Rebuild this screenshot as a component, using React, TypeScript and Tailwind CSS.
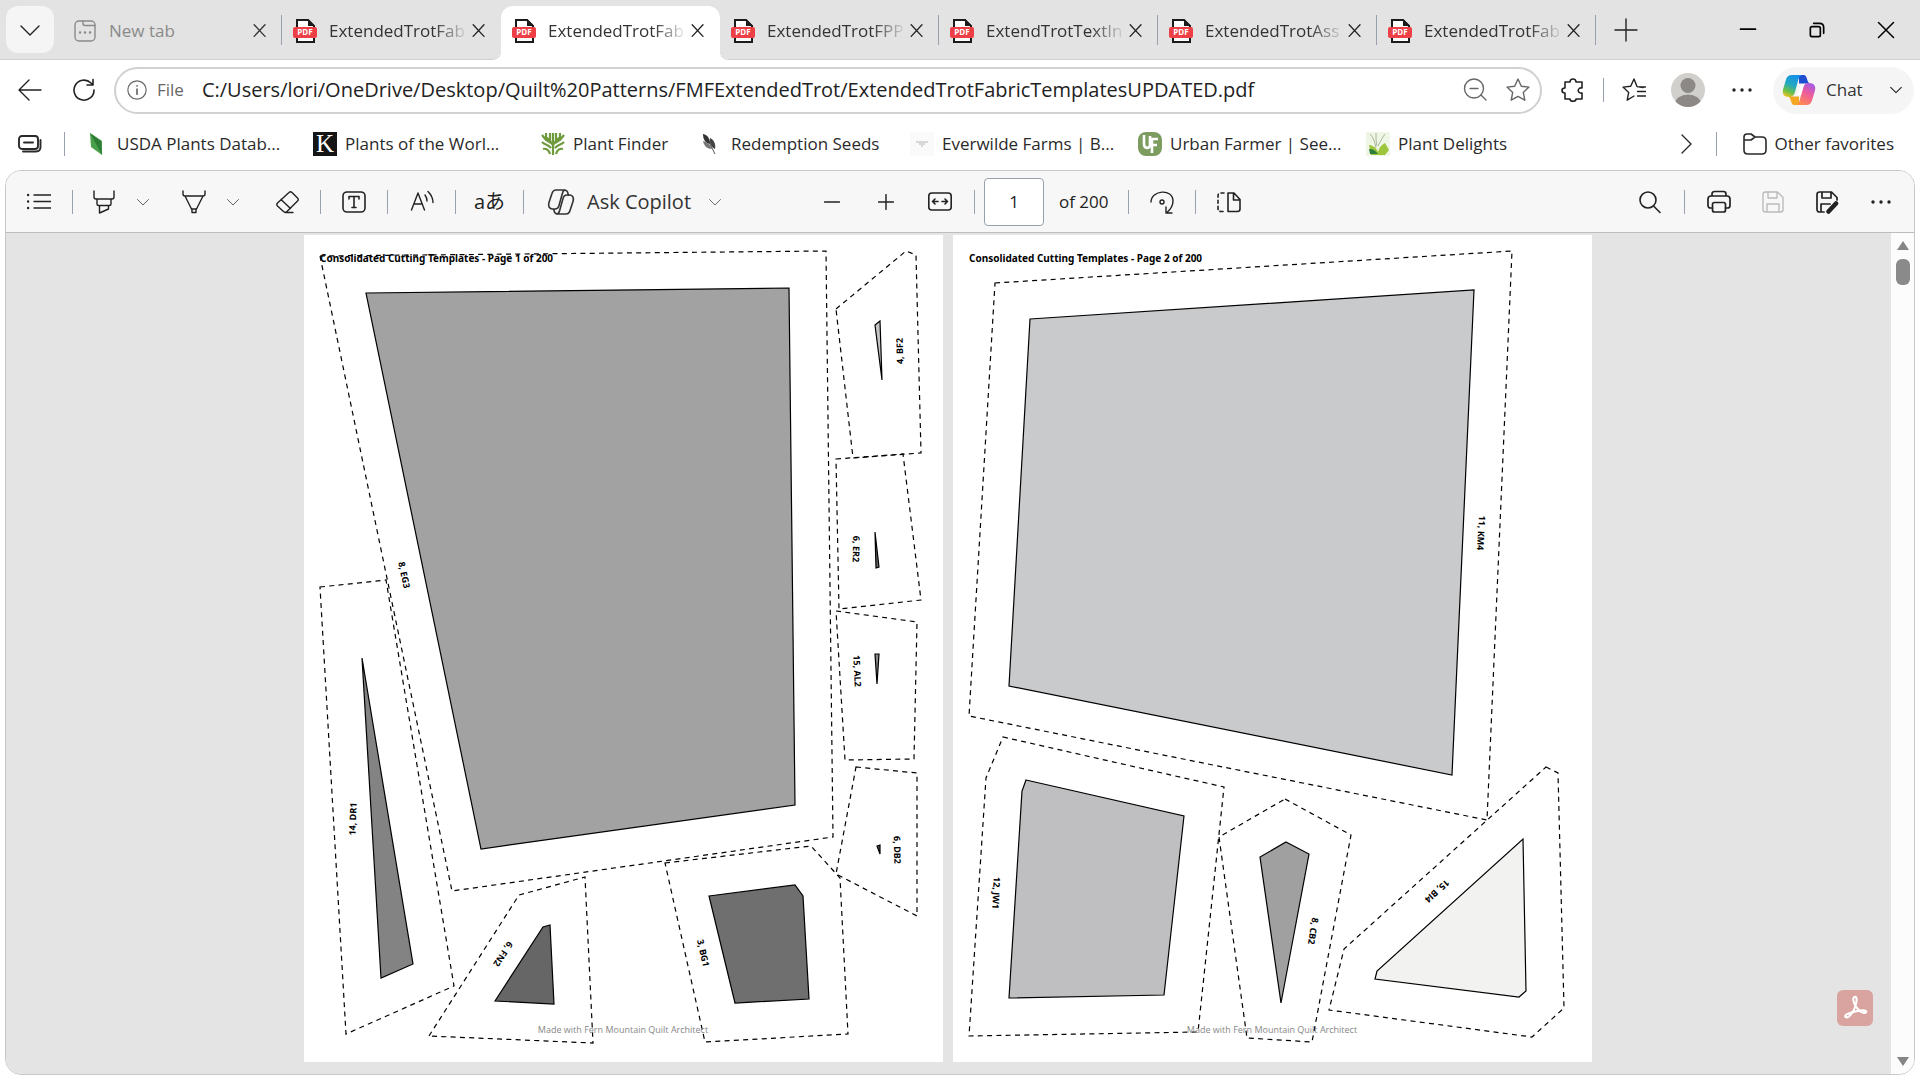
import React from 'react';

type Piece = {
  label: string;
  at: [number, number, number]; // x, y, angle
  seam: string;
  cut: string;
  fill: string;
};

// PDF coordinates share one canvas, each sheet shows its own window of it
const sheetOne: Piece[] = [
  {
    label: '8, EG3',
    at: [404, 575, 78],
    seam: '320,256 826,251 833,837 452,891',
    cut: '366,293 789,288 795,805 481,849',
    fill: '#a2a2a2',
  },
  {
    label: '14, DR1',
    at: [353, 819, -88],
    seam: '320,587 386,580 454,986 346,1034',
    cut: '362,658 413,964 381,978',
    fill: '#838383',
  },
  {
    label: '6, FN2',
    at: [503, 954, 123],
    seam: '429,1036 519,895 585,877 593,1043',
    cut: '495,1001 543,927 550,925 554,1004',
    fill: '#666666',
  },
  {
    label: '3, BG1',
    at: [703, 953, 77],
    seam: '665,863 811,846 840,878 848,1034 705,1042',
    cut: '709,896 795,885 803,896 809,999 735,1003',
    fill: '#6f6f6f',
  },
  {
    label: '4, BF2',
    at: [900, 351, -91],
    seam: '836,309 906,251 916,255 921,453 853,458',
    cut: '875,325 880,321 882,380',
    fill: '#c5c5c5',
  },
  {
    label: '6, ER2',
    at: [856, 549, 91],
    seam: '836,459 903,454 921,600 839,609',
    cut: '875,532 879,567 876,568',
    fill: '#666666',
  },
  {
    label: '15, AL2',
    at: [857, 671, 87],
    seam: '836,611 917,622 914,759 845,760',
    cut: '875,654 879,654 877,684',
    fill: '#888888',
  },
  {
    label: '6, DB2',
    at: [897, 850, 89],
    seam: '856,767 917,773 917,916 836,874',
    cut: '877,846 880,845 880,854',
    fill: '#555555',
  },
];

const sheetTwo: Piece[] = [
  {
    label: '11, KM4',
    at: [1481, 533, 93],
    seam: '995,283 1512,251 1487,820 969,716',
    cut: '1030,319 1474,290 1452,775 1009,686',
    fill: '#c9cacc',
  },
  {
    label: '12, JW1',
    at: [996, 893, 93],
    seam: '1003,737 1224,787 1198,1032 969,1036 986,778',
    cut: '1026,780 1184,816 1164,995 1009,998 1022,791',
    fill: '#bfbfc1',
  },
  {
    label: '8, CB2',
    at: [1313, 931, 99],
    seam: '1285,799 1351,835 1312,1042 1247,1038 1219,837',
    cut: '1286,842 1309,854 1281,1003 1260,857',
    fill: '#a0a0a0',
  },
  {
    label: '15, BI4',
    at: [1437, 891, 138],
    seam: '1546,767 1558,773 1564,1008 1532,1037 1329,1010 1344,949',
    cut: '1523,839 1526,991 1519,997 1375,979 1377,971',
    fill: '#f2f2f1',
  },
];

const tabs = [
  { title: 'ExtendedTrotFab', active: false },
  { title: 'ExtendedTrotFab', active: true },
  { title: 'ExtendedTrotFPP', active: false },
  { title: 'ExtendTrotTextIn', active: false },
  { title: 'ExtendedTrotAss', active: false },
  { title: 'ExtendedTrotFab', active: false },
];

const Icon: React.FC<{ children: React.ReactNode; size?: string; weight?: number }> = ({
  children,
  size = 'size-6',
  weight = 1.4,
}) => (
  <svg
    viewBox="0 0 24 24"
    className={`${size} shrink-0`}
    fill="none"
    stroke="currentColor"
    strokeWidth={weight}
    strokeLinecap="round"
    strokeLinejoin="round"
    aria-hidden="true"
  >
    {children}
  </svg>
);

const Cross = () => (
  <Icon size="size-5" weight={1.6}>
    <path d="M5 4.500l13 14M18 4.500l-13 14" />
  </Icon>
);

const Chevron = () => (
  <Icon size="size-4" weight={1.6}>
    <path d="M4 8l8 8 8-8" />
  </Icon>
);

const Dots = () => (
  <Icon>
    <g fill="currentColor" stroke="none">
      <circle cx="4" cy="12" r="1.700" />
      <circle cx="12" cy="12" r="1.700" />
      <circle cx="20" cy="12" r="1.700" />
    </g>
  </Icon>
);

const PdfIcon = () => (
  <svg viewBox="0 0 24 26" className="h-[26px] w-6 shrink-0" aria-hidden="true">
    <path d="M4 2h11l6 6v16H4z" fill="#fff" stroke="#1b1b1b" strokeWidth="2" />
    <path d="M15 1v7h7z" fill="#1b1b1b" />
    <rect x="0" y="9" width="24" height="11" rx="2" fill="#ee3e46" />
    <text x="12" y="17" textAnchor="middle" fill="#fff" fontSize="8" fontWeight="700" fontFamily="Open Sans, sans-serif">
      PDF
    </text>
  </svg>
);

const CopilotLogo = () => (
  <svg viewBox="0 0 34 32" className="h-8 w-[34px] shrink-0" aria-hidden="true">
    <defs>
      <linearGradient id="cpA" x1="0.6" y1="0" x2="0.2" y2="1">
        <stop offset="0" stopColor="#1590e8" />
        <stop offset="0.45" stopColor="#22a9c0" />
        <stop offset="0.75" stopColor="#6cc04a" />
        <stop offset="1" stopColor="#f2c21b" />
      </linearGradient>
      <linearGradient id="cpB" x1="0.8" y1="0" x2="0.3" y2="1">
        <stop offset="0" stopColor="#a25be8" />
        <stop offset="0.45" stopColor="#ee5c9c" />
        <stop offset="1" stopColor="#ff8a4c" />
      </linearGradient>
    </defs>
    <path d="M17 1h4c3 0 3.500 2 4.500 5.500.600 2 1.500 3 3.500 3H17z" fill="#1f4fd0" />
    <path d="M17 31h-4c-3 0-3.500-2-4.500-5.500-.600-2-1.500-3-3.500-3h12z" fill="#f5a623" />
    <path d="M10 1h11c-3 0-4 2-5 6l-3 11c-1 3.500-2.500 5-6 5-5 0-7-3-6-7.500L4 5.500C5 2.500 6.500 1 10 1z" fill="url(#cpA)" />
    <path d="M24 31H13c3 0 4-2 5-6l3-11c1-3.500 2.500-5 6-5 5 0 7 3 6 7.500l-3 10c-1 3-2.500 4.500-6 4.500z" fill="url(#cpB)" />
    <path d="M19 11h3l-3 10h-4z" fill="#fff" />
  </svg>
);

const Sep = () => <span className="h-6 w-px shrink-0 bg-gray-400" />;

const Tool: React.FC<{ label: string; className?: string; children: React.ReactNode }> = ({
  label,
  className = 'w-10',
  children,
}) => (
  <button aria-label={label} className={`flex h-10 shrink-0 items-center justify-center ${className}`}>
    {children}
  </button>
);

const Tab: React.FC<{ title: string; active: boolean; separator: boolean }> = ({ title, active, separator }) => (
  <div
    className={`relative flex w-[219px] shrink-0 items-center pl-[11px] pr-3 ${
      active ? 'z-10 mt-1.5 h-[54px] rounded-t-xl bg-white pb-1' : 'h-[60px] pt-0.5'
    }`}
  >
    {active && (
      <>
        <span className="absolute -left-2 bottom-0 size-2 bg-[radial-gradient(circle_at_top_left,#e3e3e3_8px,white_8px)]" />
        <span className="absolute -right-2 bottom-0 size-2 bg-[radial-gradient(circle_at_top_right,#e3e3e3_8px,white_8px)]" />
      </>
    )}
    <PdfIcon />
    <span className="ml-3 flex-1 whitespace-nowrap text-[17px] text-[#333] [mask-image:linear-gradient(to_right,black_75%,transparent)]">
      {title}
    </span>
    <button aria-label="Close tab">
      <Cross />
    </button>
    {separator && <span className="absolute right-0 top-[15px] h-[30px] w-px bg-gray-400" />}
  </div>
);

const bookmarks = [
  {
    name: 'USDA Plants Datab...',
    width: 'w-[228px]',
    icon: (
      <svg viewBox="0 0 24 24" className="size-6">
        <path d="M5 1l12 8v14L6 15z" fill="#4aa04a" />
        <path d="M5 1l12 22-1-14z" fill="#2e7d36" />
      </svg>
    ),
  },
  {
    name: 'Plants of the Worl...',
    width: 'w-[228px]',
    icon: (
      <svg viewBox="0 0 24 24" className="size-6">
        <rect width="24" height="24" fill="#151515" />
        <text x="12" y="20" textAnchor="middle" fill="#fff" fontSize="25" fontFamily="Liberation Serif, serif">
          K
        </text>
      </svg>
    ),
  },
  {
    name: 'Plant Finder',
    width: 'w-[158px]',
    icon: (
      <svg viewBox="0 0 24 24" className="size-6" fill="none" stroke="#6f9a3c" strokeWidth="2.200">
        <path d="M12 1v22M9 1v7c0 3 3 3 3 6M15 1v7c0 3-3 3-3 6M5 1v4l4 4M19 1v4l-4 4M1 3l4 5 5 3M23 3l-4 5-5 3M1 10c3 3 6 2 9 6M23 10c-3 3-6 2-9 6M2 17c3-1 6 1 7 5M22 17c-3-1-6 1-7 5" />
      </svg>
    ),
  },
  {
    name: 'Redemption Seeds',
    width: 'w-[211px]',
    icon: (
      <svg viewBox="0 0 24 24" className="size-6">
        <path d="M4 2c5 1 7 5 7 10C6 11 4 7 4 2z" fill="#333" />
        <path d="M11 6c4 2 6 6 5 11-4-2-6-6-5-11z" fill="#444" />
        <path d="M4 9c4 1 7 3 9 8-5 0-8-3-9-8z" fill="#777" />
        <path d="M11 12l5 10" stroke="#555" />
      </svg>
    ),
  },
  {
    name: 'Everwilde Farms | B...',
    width: 'w-[228px]',
    icon: (
      <svg viewBox="0 0 24 24" className="size-6">
        <rect width="24" height="24" fill="#fafafa" />
        <path d="M6 10h12M9 12h6M11 14h2" stroke="#ccc" strokeWidth="1.500" />
      </svg>
    ),
  },
  {
    name: 'Urban Farmer | See...',
    width: 'w-[228px]',
    icon: (
      <svg viewBox="0 0 24 24" className="size-6">
        <rect width="24" height="24" rx="8" fill="#7d9c60" />
        <path d="M6 3v9c0 5 6 5 6 1V4M14 21V7h6M14 13h5" fill="none" stroke="#fff" strokeWidth="2.600" />
      </svg>
    ),
  },
  {
    name: 'Plant Delights',
    width: 'w-[150px]',
    icon: (
      <svg viewBox="0 0 24 24" className="size-6">
        <rect width="24" height="24" fill="#f0f6e6" />
        <path d="M3 13c3 0 7 2 9 7 1-4 3-7 7-9l4 7-4 5H5z" fill="#9dc63c" />
        <path d="M3 17c4 0 6 1 9 5H4z" fill="#2f7d3b" />
        <path d="M4 2c3 3 5 8 6 14M10 1c0 6 0 9 1 13M19 2c-3 4-5 8-7 12" stroke="#a8b79a" fill="none" />
      </svg>
    ),
  },
];

const Sheet: React.FC<{ page: number; left: number; pieces: Piece[] }> = ({ page, left, pieces }) => (
  <svg
    viewBox={`${left} 235 639 827`}
    className="h-[827px] w-[639px] shrink-0 bg-white font-['Open_Sans',sans-serif]"
    role="img"
    aria-label={`Page ${page}`}
  >
    {pieces.map((piece) => (
      <g key={piece.label} stroke="#000">
        <polygon points={piece.seam} fill="none" strokeWidth="1.200" strokeDasharray="5 4.300" />
        <polygon points={piece.cut} fill={piece.fill} strokeWidth="1.200" />
        <text
          transform={`translate(${piece.at[0]} ${piece.at[1]}) rotate(${piece.at[2]})`}
          y="3"
          textAnchor="middle"
          stroke="none"
          fontSize="9"
          fontWeight="700"
        >
          {piece.label}
        </text>
      </g>
    ))}
    <text x={left + 16} y="262" fontSize="10" fontWeight="700" className="font-['Noto_Sans',sans-serif]">
      Consolidated Cutting Templates - Page {page} of 200
    </text>
    <text x={left + 319} y="1033" fontSize="9" textAnchor="middle" fill="#888">
      Made with Fern Mountain Quilt Architect
    </text>
  </svg>
);

const TabStrip = () => (
  <header className="flex h-[60px] shrink-0 border-b border-[#cfcfcf] bg-[#e3e3e3]">
    <button
      aria-label="Tab actions"
      className="ml-1.5 mt-1.5 mr-[9px] flex h-[47px] w-12 shrink-0 items-center justify-center rounded-xl bg-[#f5f5f5]"
    >
      <Icon size="size-6">
        <path d="M3 8l9 9 9-9" />
      </Icon>
    </button>
    <div className="relative flex h-[60px] w-[219px] shrink-0 items-center pl-2.5 pr-3 pt-0.5 text-[#8a8a8a]">
      <Icon size="size-6">
        <rect x="2" y="2" width="20" height="20" rx="4" />
        <path d="M10 2v2.500c0 1.500 1 2 2 2h10" />
        <path d="M7 13.500h.1M12 13.500h.1M17 13.500h.1" strokeWidth="2.400" />
      </Icon>
      <span className="ml-3 flex-1 text-[17px]">New tab</span>
      <button aria-label="Close tab" className="text-[#333]">
        <Cross />
      </button>
      <span className="absolute right-0 top-[15px] h-[30px] w-px bg-gray-400" />
    </div>
    {tabs.map((tab, i) => (
      <Tab key={i} title={tab.title} active={tab.active} separator={i > 1} />
    ))}
    <button aria-label="New tab" className="ml-[18px] flex h-[60px] items-center">
      <Icon>
        <path d="M1 12h22M12 1v22" />
      </Icon>
    </button>
    <div className="ml-auto flex h-[60px] items-center text-black">
      <button aria-label="Minimize" className="flex w-[69px] justify-center">
        <Icon size="size-5" weight={2}>
          <path d="M3 11h18" />
        </Icon>
      </button>
      <button aria-label="Restore" className="flex w-[69px] justify-center">
        <Icon size="size-5" weight={2}>
          <rect x="4" y="8" width="12" height="12" rx="2" />
          <path d="M8 4h7c3 0 5 2 5 5v7" />
        </Icon>
      </button>
      <button aria-label="Close" className="flex w-[69px] justify-center">
        <Icon size="size-5" weight={1.8}>
          <path d="M3 3l18 18M21 3L3 21" />
        </Icon>
      </button>
    </div>
  </header>
);

const AddressBar = () => (
  <div className="flex h-[60px] shrink-0 items-center pr-1.5">
    <button aria-label="Back" className="ml-[18px]">
      <Icon>
        <path d="M23 12H1M11 2L1 12l10 10" />
      </Icon>
    </button>
    <button aria-label="Refresh" className="ml-[30px]">
      <Icon weight={1.6}>
        <path d="M22 12a10 10 0 1 1-3-7l2 2M21 1.500V7h-6" />
      </Icon>
    </button>
    <div className="ml-[18px] flex h-[47px] flex-1 items-center rounded-full border-2 border-[#d1d1d1] pl-[11px] pr-2.5 text-[#666]">
      <Icon size="size-5">
        <circle cx="12" cy="12" r="11" />
        <path d="M12 11v6M12 7v.1" strokeWidth="2" />
      </Icon>
      <label htmlFor="url" className="ml-2.5 text-[17px]">
        File
      </label>
      <input
        id="url"
        className="ml-[18px] min-w-0 flex-1 text-xl text-[#222] outline-none"
        defaultValue="C:/Users/lori/OneDrive/Desktop/Quilt%20Patterns/FMFExtendedTrot/ExtendedTrotFabricTemplatesUPDATED.pdf"
      />
      <button aria-label="Zoom">
        <Icon>
          <circle cx="11" cy="10.500" r="9.500" />
          <path d="M18 17l5 5M7 10.500h8" />
        </Icon>
      </button>
      <button aria-label="Add to favorites" className="ml-[19px]">
        <Icon>
          <path d="M12 1l3.300 7.200 7.700.9-5.700 5.300 1.500 7.800L12 18.400l-6.800 3.800 1.500-7.800L1 9.100l7.700-.9z" />
        </Icon>
      </button>
    </div>
    <button aria-label="Extensions" className="ml-[19px]">
      <Icon weight={1.6}>
        <path d="M5 4h4c0-4 6-4 6 0h6v6c-5-1-5 6 0 5v6h-6c0 3-6 3-6 0H4v-6c-4 0-4-5 0-5V4z" />
      </Icon>
    </button>
    <span className="ml-[18px] h-6 w-px bg-gray-400" />
    <button aria-label="Favorites" className="ml-[18px]">
      <Icon>
        <path d="M21 9.500l-6-.9L12 1 8.700 8.200 1 9.100l5.700 5.300-1.500 7.800L12 18M15.500 13.500h8M15.500 18h8M18 9h5.500" />
      </Icon>
    </button>
    <button aria-label="Profile" className="ml-[25px]">
      <svg viewBox="0 0 34 34" className="size-[34px]">
        <clipPath id="face">
          <circle cx="17" cy="17" r="17" />
        </clipPath>
        <g clipPath="url(#face)">
          <rect width="34" height="34" fill="#d2d0cc" />
          <circle cx="17" cy="12.500" r="7.500" fill="#8b8886" />
          <ellipse cx="17" cy="31" rx="13" ry="9.500" fill="#8b8886" />
        </g>
      </svg>
    </button>
    <button aria-label="Settings and more" className="ml-[25px]">
      <Dots />
    </button>
    <button className="ml-[19px] flex h-[47px] w-[141px] items-center rounded-full bg-[#f5f5f5] pl-[9px] pr-2.5">
      <CopilotLogo />
      <span className="ml-2.5 text-[17px] text-[#333]">Chat</span>
      <span className="ml-auto">
        <Chevron />
      </span>
    </button>
  </div>
);

const BookmarksBar = () => (
  <nav className="flex h-[50px] shrink-0 items-center pb-0.5 text-[17px] text-[#2a2a2a]">
    <button aria-label="Workspaces" className="ml-[18px] mr-[22px]">
      <Icon weight={1.9}>
        <rect x="1" y="4" width="19" height="13" rx="3" />
        <path d="M6 10.500h9M22.500 8v7c0 3-1.500 4.500-4.500 4.500H5" />
      </Icon>
    </button>
    <Sep />
    <div className="ml-5 flex min-w-0 overflow-hidden">
      {bookmarks.map((mark) => (
        <a key={mark.name} href="#" className={`flex shrink-0 items-center gap-2 whitespace-nowrap ${mark.width}`}>
          {mark.icon}
          {mark.name}
        </a>
      ))}
    </div>
    <button aria-label="More favorites" className="ml-auto mr-[18px]">
      <Icon>
        <path d="M8 3l9 9-9 9" />
      </Icon>
    </button>
    <Sep />
    <button className="mx-[26px] flex items-center gap-2">
      <Icon weight={1.6}>
        <path d="M1 5c0-2 1-3 3-3h4l4 3h7c3 0 4 1 4 4v9c0 3-1 4-4 4H5c-3 0-4-1-4-4zM1 8h7l4-3" />
      </Icon>
      Other favorites
    </button>
  </nav>
);

const PdfToolbar = () => (
  <div className="flex h-[62px] shrink-0 items-center gap-[13px] border-b border-[#bdbdbd] bg-[#f7f7f7] text-[#222]">
    <Tool label="Contents" className="ml-[13px] w-10">
      <Icon>
        <path d="M7 5h17M7 11.500h17M7 18h17" />
        <path d="M1 5h.1M1 11.500h.1M1 18h.1" strokeWidth="2.400" />
      </Icon>
    </Tool>
    <Sep />
    <Tool label="Highlight" className="w-9">
      <Icon>
        <path d="M2 1v6c0 1.500.500 2 2 2h16c1.500 0 2-.500 2-2V1M5 9v5c0 1 .500 1.500 1.500 1.500h11c1 0 1.500-.500 1.500-1.500V9M7.500 15.500V23l9-4v-3.500" />
      </Icon>
    </Tool>
    <Tool label="Highlight colors" className="w-4">
      <Icon size="size-3">
        <path d="M1 7l11 11L23 7" />
      </Icon>
    </Tool>
    <Tool label="Draw" className="ml-3 w-9">
      <Icon>
        <path d="M1 1v3c0 1.500.500 2 2 2h18c1.500 0 2-.500 2-2V1M3 6l7 14v2.500h4V20l7-14M10 19h4" />
      </Icon>
    </Tool>
    <Tool label="Draw options" className="w-4">
      <Icon size="size-3">
        <path d="M1 7l11 11L23 7" />
      </Icon>
    </Tool>
    <Tool label="Erase" className="ml-[13px] w-10">
      <Icon>
        <path d="M14 2.500c1-1 2-1 3 0L22.500 8c1 1 1 2 0 3L12 21.500c-1 1-2.500 1-3.500 0L2.500 16c-1-1-1-2 0-3zM6 9.500l9.500 9M10 22.500h8" />
      </Icon>
    </Tool>
    <Sep />
    <Tool label="Add text">
      <Icon weight={1.6}>
        <rect x="1" y="2" width="22" height="20" rx="4" />
        <path d="M7 9V6.500h10V9M12 6.500v11M10 17.500h4" />
      </Icon>
    </Tool>
    <Sep />
    <Tool label="Read aloud" className="w-[41px]">
      <Icon>
        <path d="M1.500 20L8 3l6.500 17M4 14h8M15 5c1.500 2 2 4 2 6M18 1.500c3 3 5 7 5 11" />
      </Icon>
    </Tool>
    <Sep />
    <Tool label="Translate" className="w-[41px]">
      <span className="whitespace-nowrap font-['Open_Sans','Noto_Sans_CJK_JP',sans-serif] text-xl leading-6">aあ</span>
    </Tool>
    <Sep />
    <button className="flex h-10 w-[190px] shrink-0 items-center pl-2.5 text-xl text-[#333]">
      <svg viewBox="0 0 28 26" className="h-[26px] w-7" fill="none" stroke="currentColor" strokeWidth="1.600" strokeLinejoin="round">
        <path d="M13 1h4c2.500 0 3.500 1 4 3.500l.6 2.500M13 1H9C6.500 1 5.500 2.500 4.800 5L2 13.500C.8 17.500 2.500 20 5.500 20H8c2.500 0 3.500-1.500 4-3.500L15.500 4C16 2 17 1 18.500 1" />
        <path d="M15 25h-4c-2.500 0-3.500-1-4-3.500L6.500 20M15 25h4c2.500 0 3.500-1.500 4.200-4L26 12.500C27.200 8.500 25.500 6 22.500 6H20c-2.500 0-3.500 1.500-4 3.500L12.500 22c-.500 2-1.500 3-3 3" />
      </svg>
      <span className="ml-3 whitespace-nowrap">Ask Copilot</span>
      <span className="ml-auto pr-1.5">
        <Icon size="size-3">
          <path d="M1 7l11 11L23 7" />
        </Icon>
      </span>
    </button>
    <div className="ml-[72px] flex items-center gap-[14px]">
      <Tool label="Zoom out">
        <Icon size="size-4" weight={2.2}>
          <path d="M1 12h22" />
        </Icon>
      </Tool>
      <Tool label="Zoom in">
        <Icon size="size-4" weight={2.2}>
          <path d="M1 12h22M12 1v22" />
        </Icon>
      </Tool>
      <Tool label="Fit to width">
        <Icon weight={1.6}>
          <rect x="0.800" y="3" width="22.400" height="17" rx="3" />
          <path d="M10 11.500H5M7 9l-2.500 2.500L7 14M14 11.500h5M17 9l2.500 2.500L17 14" />
        </Icon>
      </Tool>
      <div className="flex items-center gap-[13px]">
        <Sep />
        <label htmlFor="page" className="sr-only">
          Page number
        </label>
        <input
          id="page"
          className="-ml-1 h-12 w-[60px] rounded-sm border border-gray-400 bg-white text-center text-[17px] text-[#222]"
          defaultValue="1"
        />
        <span className="ml-0.5 w-14 whitespace-nowrap text-[17px]">of 200</span>
        <Sep />
        <Tool label="Rotate">
          <Icon>
            <path d="M1 12C1 0 23-2 23 11c0 5-2 8-6 11.500M16 17v6h6" />
            <circle cx="12" cy="12" r="2" />
          </Icon>
        </Tool>
        <Sep />
        <Tool label="Page view">
          <Icon weight={1.6}>
            <path d="M11 3h6l6 6.500V19c0 1.500-1 2.500-2.500 2.500H11zM16.500 3v7H23" />
            <path d="M7 3H4C2 3 1 4 1 6v12c0 2.500 1 3.500 3 3.500h3" strokeDasharray="3 3" />
          </Icon>
        </Tool>
      </div>
    </div>
    <div className="ml-auto mr-[13px] flex items-center gap-[14px]">
      <Tool label="Search">
        <Icon weight={1.6}>
          <circle cx="10" cy="10" r="8" />
          <path d="M16 16.500l6 6" />
        </Icon>
      </Tool>
      <Sep />
      <Tool label="Print">
        <Icon weight={1.7}>
          <path d="M5 6V4c0-1.500 1-2.500 2.500-2.500h9C18 1.500 19 2.500 19 4v2M5.500 18H3.500C2 18 1 17 1 15.500V9c0-2 1-3 3-3h16c2 0 3 1 3 3v6.500c0 1.500-1 2.500-2.500 2.500h-2" />
          <rect x="5.500" y="12.500" width="13" height="9.500" rx="2" />
        </Icon>
      </Tool>
      <Tool label="Save" className="w-10 text-[#bbb]">
        <Icon>
          <path d="M2 4.500C2 3 3 2 4.500 2h12L22 7.500v12c0 1.500-1 2.500-2.500 2.500h-15C3 22 2 21 2 19.500zM7 2v6h9V2M6 22v-8h12v8" />
        </Icon>
      </Tool>
      <Tool label="Save as">
        <Icon weight={1.7}>
          <path d="M9 22H4.500C3 22 2 21 2 19.500v-15C2 3 3 2 4.500 2h12L22 7.500V10M7 2v6h9V2M6 22v-8h9" />
          <path d="M13.500 21.500L21 13.500" strokeWidth="4.500" />
        </Icon>
      </Tool>
      <Tool label="More">
        <Dots />
      </Tool>
    </div>
  </div>
);

const App: React.FC = () => {
  return (
    <div className="flex h-screen flex-col overflow-hidden bg-white font-['Open_Sans',sans-serif] text-[#222]">
      <TabStrip />
      <AddressBar />
      <BookmarksBar />
      <main className="mx-[5px] mb-[5px] flex min-h-0 flex-1 flex-col overflow-hidden rounded-2xl border border-[#c8c8c8]">
        <PdfToolbar />
        <div className="flex min-h-0 flex-1">
          <div className="relative flex flex-1 justify-center gap-2.5 overflow-hidden bg-[#e4e4e4] pt-0.5 pr-px">
            <Sheet page={1} left={304} pieces={sheetOne} />
            <Sheet page={2} left={953} pieces={sheetTwo} />
            <button
              aria-label="Open in Acrobat"
              className="absolute bottom-12 right-[18px] flex size-9 items-center justify-center rounded-md bg-[#d9a3a0] text-white"
            >
              <Icon size="size-7" weight={1.8}>
                <path d="M11 3c2-2 3 1 2 5-1 5-5 12-8 12-2 0-2-2 1-3 5-2 9-3 13-3 4 0 3 3 0 2-4-1-8-7-8.500-11 0-1 0-1.500.500-2z" />
              </Icon>
            </button>
          </div>
          <div className="flex w-[23px] flex-col items-center bg-[#fcfcfc] py-2">
            <svg viewBox="0 0 12 10" className="h-2.5 w-3" fill="#858585">
              <path d="M6 0l6 9H0z" />
            </svg>
            <span className="mt-2 h-[26px] w-3.5 rounded-md bg-[#8a8a8a]" />
            <svg viewBox="0 0 12 10" className="mt-auto h-2.5 w-3" fill="#858585">
              <path d="M6 10l6-9H0z" />
            </svg>
          </div>
        </div>
      </main>
    </div>
  );
};

export default App;
